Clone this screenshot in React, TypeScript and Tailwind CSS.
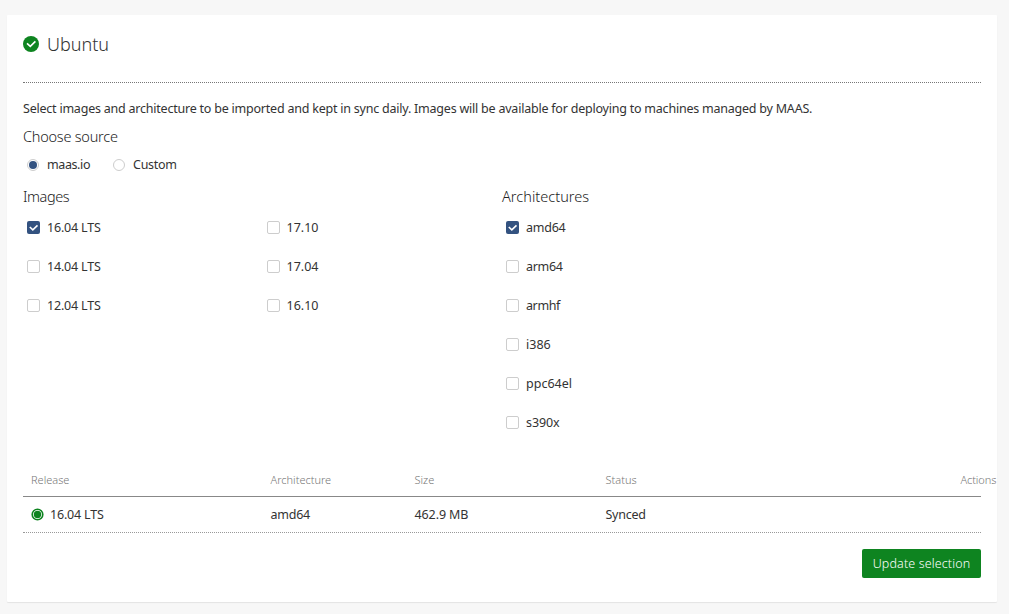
type Item = { label: string; checked?: boolean; spacing?: string };

const releases: Item[] = [
  { label: "16.04 LTS", checked: true, spacing: "tracking-[-0.18px]" },
  { label: "14.04 LTS", spacing: "tracking-[-0.18px]" },
  { label: "12.04 LTS", spacing: "tracking-[-0.18px]" },
];
const interim: Item[] = [{ label: "17.10" }, { label: "17.04" }, { label: "16.10" }];
const architectures: Item[] = [
  { label: "amd64", checked: true, spacing: "tracking-[-0.25px]" },
  { label: "arm64", spacing: "tracking-[-0.3px]" },
  { label: "armhf", spacing: "tracking-[-0.4px]" },
  { label: "i386" },
  { label: "ppc64el" },
  { label: "s390x", spacing: "tracking-[-0.1px]" },
];

function Checkbox({ label, checked, spacing = "" }: Item) {
  return (
    <label className="flex h-[39px] items-center pl-1">
      {checked ? (
        <span className="flex size-[13px] items-center justify-center rounded-[2px] bg-[#335280]">
          <svg className="size-[13px]" viewBox="0 0 13 13" fill="none">
            <path d="M2.8 6 5.8 8.8 10.5 4.4" stroke="#fff" strokeWidth="1.6" />
          </svg>
        </span>
      ) : (
        <span className="size-[13px] rounded-[2px] border border-[#cdcdcd] bg-white" />
      )}
      <span className={`ml-[7px] ${spacing}`}>{label}</span>
    </label>
  );
}

function Radio({ label, checked, spacing = "" }: Item) {
  return (
    <label className="flex items-center">
      <span className="flex size-3 items-center justify-center rounded-full border border-[#cdcdcd]">
        {checked && <span className="size-2 rounded-full bg-[#335280]" />}
      </span>
      <span className={`ml-2 ${spacing}`}>{label}</span>
    </label>
  );
}

export default function App() {
  return (
    <div className="h-[614px] overflow-hidden bg-[#f7f7f7] pt-[15px] pl-[7px] font-['Noto_Sans','Open_Sans',sans-serif] text-[12.5px] leading-5 text-[#333]">
      <main className="h-[587px] w-[990px] rounded-[1px] bg-white px-4 shadow-[0_1px_1px_rgba(0,0,0,0.08)]">
        <header className="flex h-[68px] items-start border-b border-dotted border-[#777] pt-[21px]">
          <svg className="size-4" viewBox="0 0 16 16" fill="none">
            <circle cx="8" cy="8" r="8" fill="#0e8420" />
            <path d="M4 7.3 7.3 10.4 12.4 5.4" stroke="#fff" strokeWidth="1.6" />
          </svg>
          <h1 className="-mt-0.5 ml-2 text-[18px] leading-5 font-light">Ubuntu</h1>
        </header>
        <p className="mt-4 tracking-[-0.221px] whitespace-nowrap">
          Select images and architecture to be imported and kept in sync daily. Images will be available for deploying to
          machines managed by MAAS.
        </p>
        <h2 className="mt-[7px] text-[14.5px] font-light tracking-[-0.23px] text-[#222]">Choose source</h2>
        <div className="mt-[9px] flex gap-[23px] pl-1">
          <Radio label="maas.io" checked spacing="tracking-[-0.4px]" />
          <Radio label="Custom" spacing="tracking-[-0.28px]" />
        </div>
        <div className="mt-[11px] flex h-[257px]">
          <section className="w-[479px]">
            <h2 className="text-[14.5px] font-light tracking-[-0.45px] text-[#222]">Images</h2>
            <div className="mt-0.5 grid grid-cols-2">
              <div>{releases.map((r) => <Checkbox key={r.label} {...r} />)}</div>
              <div>{interim.map((r) => <Checkbox key={r.label} {...r} />)}</div>
            </div>
          </section>
          <section>
            <h2 className="text-[14.5px] font-light tracking-[0.03px] text-[#222]">Architectures</h2>
            <div className="mt-0.5">{architectures.map((a) => <Checkbox key={a.label} {...a} />)}</div>
          </section>
        </div>
        <div className="mt-[26px] grid h-7 grid-cols-[239.5px_144px_191px_355px_1fr] border-b border-[#888] pt-px pl-2 text-[11px] font-light whitespace-nowrap text-[#777]">
          <span>Release</span>
          <span>Architecture</span>
          <span>Size</span>
          <span>Status</span>
          <span className="tracking-[-0.1px]">Actions</span>
        </div>
        <div className="grid h-9 grid-cols-[239.5px_144px_191px_1fr] items-center border-b border-dotted border-[#999] pl-2">
          <span className="flex items-center">
            <svg className="size-[13px]" viewBox="0 0 13 13" fill="none">
              <circle cx="6.5" cy="6.5" r="5.3" stroke="#0e8420" strokeWidth="1.6" />
              <circle cx="6.5" cy="6.5" r="3.7" fill="#0e8420" />
            </svg>
            <span className="ml-1.5 tracking-[-0.18px]">16.04 LTS</span>
          </span>
          <span className="tracking-[-0.25px]">amd64</span>
          <span className="tracking-[-0.1px]">462.9 MB</span>
          <span className="tracking-[-0.25px]">Synced</span>
        </div>
        <div className="flex justify-end pt-4">
          <button className="h-[29px] w-[119px] rounded-[2px] bg-[#0e8420] font-light tracking-[0.12px] whitespace-nowrap text-white">
            Update selection
          </button>
        </div>
      </main>
    </div>
  );
}
